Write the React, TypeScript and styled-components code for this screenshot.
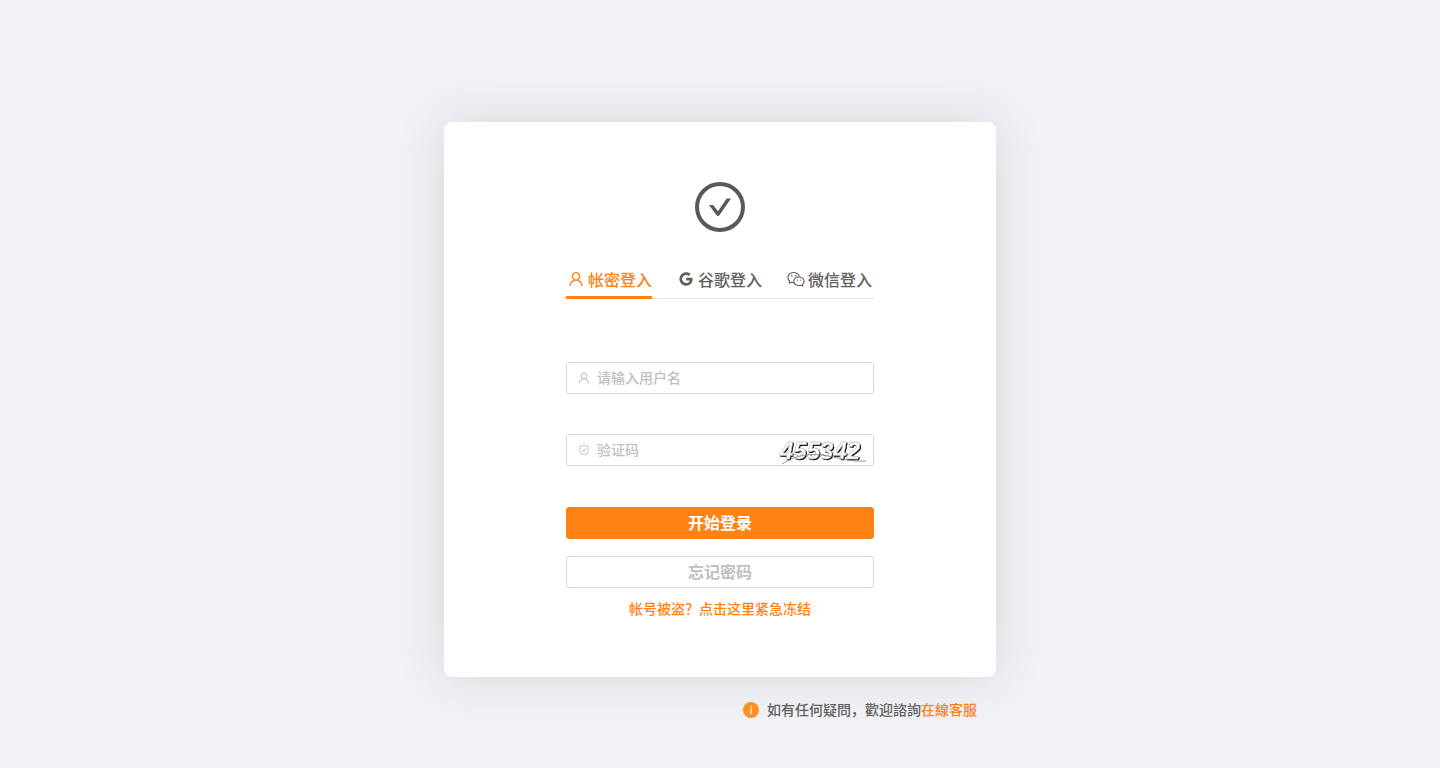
import React, { useState } from 'react';
import styled, { createGlobalStyle } from 'styled-components';
import { AiOutlineGoogle, AiOutlineSafety, AiOutlineUser } from 'react-icons/ai';

const orange = '#ff8214';
const grey = '#606060';

const GlobalStyle = createGlobalStyle`
  *, *::before, *::after { box-sizing: border-box; }
  body {
    margin: 0;
    background: #f0f2f6;
    color: ${grey};
    font: 500 14px/22px "Liberation Sans", "Noto Sans CJK SC", sans-serif;
  }
  button, input { font-family: inherit; font-weight: inherit; }
`;

const Page = styled.main`
  display: flex;
  flex-direction: column;
  align-items: center;
  min-height: 100vh;
  padding: 122px 16px 32px;
`;

const Column = styled.div`
  width: 100%;
  max-width: 552px;
`;

const Card = styled.section`
  display: flex;
  flex-direction: column;
  align-items: center;
  padding: 60px 24px 57px;
  border-radius: 8px;
  background: #fff;
  box-shadow: 0 0 50px rgba(60, 50, 0, 0.13);
`;

const Logo = styled.svg`
  width: 50px;
  height: 50px;
`;

const Form = styled.form`
  display: flex;
  flex-direction: column;
  width: 100%;
  max-width: 308px;
  margin-top: 30px;
`;

const Tabs = styled.div`
  display: flex;
  gap: 24px;
  margin-bottom: 63px;
  box-shadow: inset 0 -1px #e4e4e4;
`;

const Tab = styled.button<{ $active: boolean }>`
  display: flex;
  align-items: center;
  gap: 3px;
  height: 37px;
  padding: 0 0 0 1px;
  border: 0;
  border-bottom: 3px solid ${({ $active }) => ($active ? orange : 'transparent')};
  background: none;
  color: ${({ $active }) => ($active ? orange : grey)};
  font-size: 16px;
  line-height: 24px;
  white-space: nowrap;
  cursor: pointer;

  svg { flex: none; }
`;

const TabLabel = styled.span`
  padding-top: 3px;
`;

const Field = styled.label`
  display: flex;
  align-items: center;
  height: 32px;
  margin-bottom: 40px;
  padding: 0 6px 0 10px;
  border: 1px solid #d9d9d9;
  border-radius: 3px;
  color: #bfbfbf;
`;

const FieldIcon = styled.span`
  display: flex;
  flex: none;
  justify-content: center;
  width: 14px;
  margin-right: 6px;
`;

const Input = styled.input`
  flex: 1;
  min-width: 0;
  padding: 0;
  border: 0;
  outline: 0;
  background: none;
  color: ${grey};
  font-size: 14px;
  line-height: 22px;

  &::placeholder { color: #bfbfbf; opacity: 1; }
`;

const CaptchaImage = styled.svg`
  flex: none;
  width: 90px;
  height: 30px;
`;

const Actions = styled.div`
  display: flex;
  flex-direction: column;
  gap: 17px;
  margin-top: 1px;
`;

const Button = styled.button<{ $primary?: boolean }>`
  height: 32px;
  padding: 2px 0 0;
  border: 1px solid ${({ $primary }) => ($primary ? orange : '#d9d9d9')};
  border-radius: 3px;
  background: ${({ $primary }) => ($primary ? orange : '#fff')};
  color: ${({ $primary }) => ($primary ? '#fff' : '#bfbfbf')};
  font-size: 16px;
  font-weight: 700;
  line-height: 24px;
  cursor: pointer;
`;

const Link = styled.a`
  color: ${orange};
  text-decoration: none;
`;

const FreezeLink = styled(Link)`
  align-self: center;
  margin-top: 10px;
`;

const Help = styled.p`
  display: flex;
  align-items: center;
  justify-content: flex-end;
  gap: 8px;
  margin: 22px 0 0;
  padding-right: 19px;
`;

function WechatIcon({ size }: { size: number }) {
  return (
    <svg width={size} height={size} viewBox="0 0 18 18" fill="none" stroke="currentColor" strokeWidth="1.1" strokeLinejoin="round" aria-hidden="true">
      <path d="M7 12.8Q5.6 12.8 4.5 12.3L2.2 13.3 2.6 11.2A5.8 5.1 0 1 1 12.2 6" />
      <path d="M15.5 14.4 15.8 16.1 14 15.2A5.2 4.3 0 1 1 15.5 14.4Z" />
      <g fill="currentColor" stroke="none">
        <circle cx="4.8" cy="5.8" r=".8" />
        <circle cx="8.9" cy="5.8" r=".8" />
        <circle cx="10.5" cy="10.1" r=".7" />
        <circle cx="13.8" cy="10.1" r=".7" />
      </g>
    </svg>
  );
}

const tabs = [
  { label: '帐密登入', Icon: AiOutlineUser },
  { label: '谷歌登入', Icon: AiOutlineGoogle },
  { label: '微信登入', Icon: WechatIcon },
];

function Captcha() {
  const text = {
    x: 3,
    y: 24,
    fontFamily: '"Liberation Sans", sans-serif',
    fontSize: 24,
    fontWeight: 700,
    fontStyle: 'italic',
  };
  return (
    <CaptchaImage viewBox="0 0 90 30" role="img" aria-label="455342">
      <defs>
        <filter id="relief" x="-10%" y="-20%" width="120%" height="150%">
          <feDropShadow dx="1" dy="1" stdDeviation="0.3" floodColor="#000" />
        </filter>
      </defs>
      <text {...text} fill="#fff" stroke="#999" strokeWidth=".4" filter="url(#relief)">455342</text>
      <path d="M5 29C15 22 29 18 45 20S70 27 89 26" fill="none" stroke="#777" strokeWidth=".8" />
    </CaptchaImage>
  );
}

export default function App() {
  const [active, setActive] = useState(0);
  return (
    <>
      <GlobalStyle />
      <Page>
        <Column>
          <Card>
            <Logo viewBox="0 0 50 50" fill="none" aria-hidden="true">
              <circle cx="25" cy="25" r="23" stroke="#595959" strokeWidth="4" />
              <path d="M14 23h4.1l4.9 6.2L31.7 16.4H36L24.6 33q-1.6 2-3.2 0Z" fill="#595959" />
            </Logo>
            <Form onSubmit={(e) => e.preventDefault()}>
              <Tabs role="tablist">
                {tabs.map(({ label, Icon }, i) => (
                  <Tab
                    key={label}
                    type="button"
                    role="tab"
                    aria-selected={i === active}
                    $active={i === active}
                    onClick={() => setActive(i)}
                  >
                    <Icon size={18} />
                    <TabLabel>{label}</TabLabel>
                  </Tab>
                ))}
              </Tabs>
              <Field>
                <FieldIcon><AiOutlineUser size={14} /></FieldIcon>
                <Input aria-label="用户名" placeholder="请输入用户名" />
              </Field>
              <Field>
                <FieldIcon><AiOutlineSafety size={12} /></FieldIcon>
                <Input aria-label="验证码" placeholder="验证码" />
                <Captcha />
              </Field>
              <Actions>
                <Button type="submit" $primary>开始登录</Button>
                <Button type="button">忘记密码</Button>
              </Actions>
              <FreezeLink href="#freeze">帐号被盗？点击这里紧急冻结</FreezeLink>
            </Form>
          </Card>
          <Help>
            <svg width="16" height="16" viewBox="0 0 16 16" aria-hidden="true">
              <circle cx="8" cy="8" r="8" fill="#ff9022" />
              <path d="M7.2 4h1.6v1.4H7.2ZM7.2 6.5h1.6V12H7.2Z" fill="#ffe3c4" />
            </svg>
            <span>如有任何疑問，歡迎諮詢<Link href="#service">在線客服</Link></span>
          </Help>
        </Column>
      </Page>
    </>
  );
}
